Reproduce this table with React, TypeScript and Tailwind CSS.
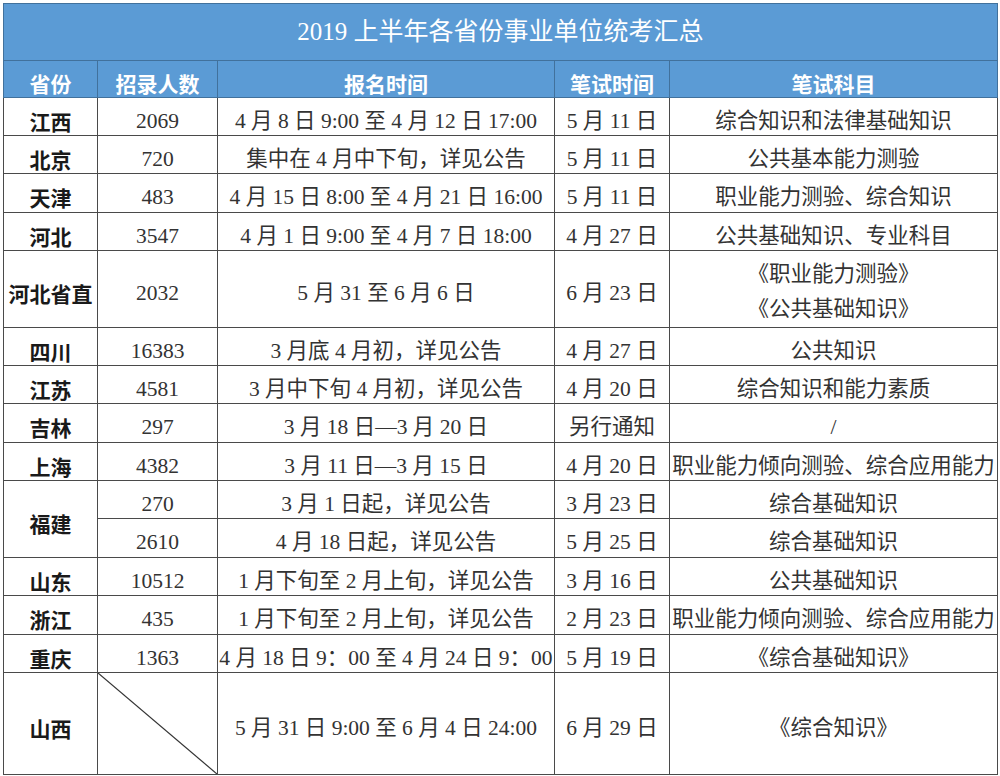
const body = "font-['Liberation_Serif','Noto_Sans_CJK_SC',serif] text-[21.5px] text-[#333]";
const prov = "font-['Noto_Sans_CJK_SC',sans-serif] font-bold text-[21px] text-[#1a1a1a]";
const cell = "border border-[#4a4a4a] px-0 pb-0 text-center align-middle whitespace-nowrap";
const pad = "pt-[8px] leading-[28px]";

type Row = {
  province?: string;
  span?: number;
  count: string;
  signup: string;
  exam: string;
  subject: React.ReactNode;
  h: string;
  twoLine?: boolean;
};

const rows: Row[] = [
  { province: "江西", count: "2069", signup: "4 月 8 日 9:00 至 4 月 12 日 17:00", exam: "5 月 11 日", subject: "综合知识和法律基础知识", h: "h-[38px]" },
  { province: "北京", count: "720", signup: "集中在 4 月中下旬，详见公告", exam: "5 月 11 日", subject: "公共基本能力测验", h: "h-[38px]" },
  { province: "天津", count: "483", signup: "4 月 15 日 8:00 至 4 月 21 日 16:00", exam: "5 月 11 日", subject: "职业能力测验、综合知识", h: "h-[39px]" },
  { province: "河北", count: "3547", signup: "4 月 1 日 9:00 至 4 月 7 日 18:00", exam: "4 月 27 日", subject: "公共基础知识、专业科目", h: "h-[38px]" },
  {
    province: "河北省直",
    count: "2032",
    signup: "5 月 31 至 6 月 6 日",
    exam: "6 月 23 日",
    subject: (
      <span className="block leading-[35px]">
        《职业能力测验》
        <br />
        《公共基础知识》
      </span>
    ),
    h: "h-[76px]",
    twoLine: true,
  },
  { province: "四川", count: "16383", signup: "3 月底 4 月初，详见公告", exam: "4 月 27 日", subject: "公共知识", h: "h-[38px]" },
  { province: "江苏", count: "4581", signup: "3 月中下旬 4 月初，详见公告", exam: "4 月 20 日", subject: "综合知识和能力素质", h: "h-[38px]" },
  { province: "吉林", count: "297", signup: "3 月 18 日—3 月 20 日", exam: "另行通知", subject: "/", h: "h-[39px]" },
  { province: "上海", count: "4382", signup: "3 月 11 日—3 月 15 日", exam: "4 月 20 日", subject: "职业能力倾向测验、综合应用能力", h: "h-[38px]" },
  { province: "福建", span: 2, count: "270", signup: "3 月 1 日起，详见公告", exam: "3 月 23 日", subject: "综合基础知识", h: "h-[38px]" },
  { count: "2610", signup: "4 月 18 日起，详见公告", exam: "5 月 25 日", subject: "综合基础知识", h: "h-[39px]" },
  { province: "山东", count: "10512", signup: "1 月下旬至 2 月上旬，详见公告", exam: "3 月 16 日", subject: "公共基础知识", h: "h-[38px]" },
  { province: "浙江", count: "435", signup: "1 月下旬至 2 月上旬，详见公告", exam: "2 月 23 日", subject: "职业能力倾向测验、综合应用能力", h: "h-[39px]" },
  { province: "重庆", count: "1363", signup: "4 月 18 日 9：00 至 4 月 24 日 9：00", exam: "5 月 19 日", subject: "《综合基础知识》", h: "h-[38px]" },
];

function SlashCell() {
  return (
    <td className={`${cell} pt-0 relative`}>
      <svg className="absolute inset-0 w-full h-full" viewBox="0 0 100 100" preserveAspectRatio="none">
        <line x1="0" y1="0" x2="100" y2="100" stroke="#333" strokeWidth="1.2" vectorEffect="non-scaling-stroke" />
      </svg>
    </td>
  );
}

export default function App() {
  const head = "border border-[#41719c] px-0 pb-0 pt-[8px] leading-[28px] text-center align-middle font-['Noto_Sans_CJK_SC',sans-serif] font-bold text-[21px] text-white";
  return (
    <div className="w-[1000px] h-[776px] bg-white pt-[3px] pl-[3px]">
      <table className="w-[994px] table-fixed border-collapse">
        <colgroup>
          <col className="w-[94px]" />
          <col className="w-[120px]" />
          <col className="w-[337px]" />
          <col className="w-[115px]" />
          <col className="w-[328px]" />
        </colgroup>
        <tbody>
          {/* Title */}
          <tr className="h-[57px] bg-[#5b9bd5]">
            <td
              colSpan={5}
              className="border border-[#41719c] p-0 text-center align-middle font-['Liberation_Serif','Noto_Sans_CJK_SC',serif] text-[25px] text-white"
            >
              2019 上半年各省份事业单位统考汇总
            </td>
          </tr>
          {/* Header */}
          <tr className="h-[37px] bg-[#5b9bd5]">
            <td className={head}>省份</td>
            <td className={head}>招录人数</td>
            <td className={head}>报名时间</td>
            <td className={head}>笔试时间</td>
            <td className={head}>笔试科目</td>
          </tr>
          {rows.map((r, i) => (
            <tr key={i} className={r.h}>
              {r.province && (
                <td rowSpan={r.span} className={`${cell} ${pad} ${prov}`}>
                  {r.province}
                </td>
              )}
              <td className={`${cell} ${pad} ${body}`}>{r.count}</td>
              <td className={`${cell} ${pad} ${body}`}>{r.signup}</td>
              <td className={`${cell} ${pad} ${body}`}>{r.exam}</td>
              <td className={`${cell} ${r.twoLine ? "pt-[6px]" : pad} ${body}`}>{r.subject}</td>
            </tr>
          ))}
          {/* Shanxi */}
          <tr className="h-[102px]">
            <td className={`${cell} ${pad} ${prov}`}>山西</td>
            <SlashCell />
            <td className={`${cell} ${pad} ${body}`}>5 月 31 日 9:00 至 6 月 4 日 24:00</td>
            <td className={`${cell} ${pad} ${body}`}>6 月 29 日</td>
            <td className={`${cell} ${pad} ${body}`}>《综合知识》</td>
          </tr>
        </tbody>
      </table>
    </div>
  );
}
